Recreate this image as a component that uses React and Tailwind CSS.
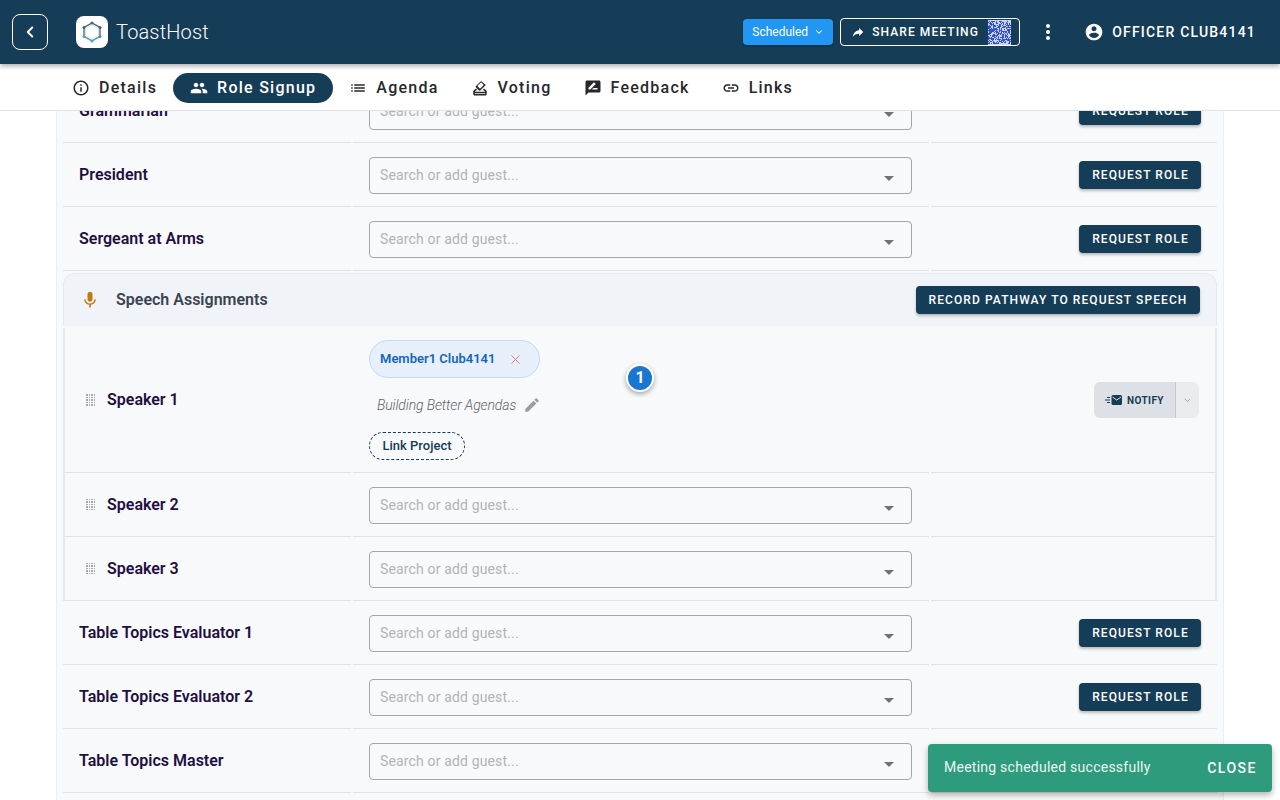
import { ChevronLeft, ChevronDown, X } from "lucide-react";

const icons = {
  info: "M11 7h2v2h-2zm0 4h2v6h-2zm1-9C6.48 2 2 6.48 2 12s4.48 10 10 10 10-4.48 10-10S17.52 2 12 2zm0 18c-4.41 0-8-3.59-8-8s3.59-8 8-8 8 3.59 8 8-3.59 8-8 8z",
  people: "M16 11c1.66 0 2.99-1.34 2.99-3S17.66 5 16 5c-1.66 0-3 1.34-3 3s1.34 3 3 3zm-8 0c1.66 0 2.99-1.34 2.99-3S9.66 5 8 5C6.34 5 5 6.34 5 8s1.34 3 3 3zm0 2c-2.33 0-7 1.17-7 3.5V19h14v-2.5c0-2.33-4.67-3.5-7-3.5zm8 0c-.29 0-.62.02-.97.05 1.16.84 1.97 1.97 1.97 3.45V19h6v-2.5c0-2.33-4.67-3.5-7-3.5z",
  list: "M3 13h2v-2H3v2zm0 4h2v-2H3v2zm0-8h2V7H3v2zm4 4h14v-2H7v2zm0 4h14v-2H7v2zM7 7v2h14V7H7z",
  vote: "M18 13h-.68l-2 2h1.91L19 17H5l1.78-2h2.05l-2-2H6l-3 3v4c0 1.1.89 2 1.99 2H19c1.1 0 2-.89 2-2v-4l-3-3zm1 7H5v-1h14v1zm-7.66-4.98c.39.39 1.02.39 1.41 0l6.36-6.36c.39-.39.39-1.02 0-1.41L14.16 3.3c-.38-.4-1.01-.4-1.4-.01L6.39 9.66c-.39.39-.39 1.02 0 1.41l4.95 4.95zm2.12-10.61L17 7.95l-4.95 4.95-3.54-3.54 4.95-4.95z",
  feedback: "M20 2H4c-1.1 0-2 .9-2 2v18l4-4h14c1.1 0 2-.9 2-2V4c0-1.1-.9-2-2-2zM6 14v-2.47l6.88-6.88c.2-.2.51-.2.71 0l1.77 1.77c.2.2.2.51 0 .71L8.47 14H6zm12 0h-7.5l2-2H18v2z",
  link: "M3.9 12c0-1.71 1.39-3.1 3.1-3.1h4V7H7c-2.76 0-5 2.24-5 5s2.24 5 5 5h4v-1.9H7c-1.71 0-3.1-1.39-3.1-3.1zM8 13h8v-2H8v2zm9-6h-4v1.9h4c1.71 0 3.1 1.39 3.1 3.1s-1.39 3.1-3.1 3.1h-4V17h4c2.76 0 5-2.24 5-5s-2.24-5-5-5z",
  share: "M14 9V5l7 7-7 7v-4.1c-5 0-8.5 1.6-11 5.1 1-5 4-10 11-11z",
  more: "M12 8c1.1 0 2-.9 2-2s-.9-2-2-2-2 .9-2 2 .9 2 2 2zm0 2c-1.1 0-2 .9-2 2s.9 2 2 2 2-.9 2-2-.9-2-2-2zm0 6c-1.1 0-2 .9-2 2s.9 2 2 2 2-.9 2-2-.9-2-2-2z",
  account: "M12 2C6.48 2 2 6.48 2 12s4.48 10 10 10 10-4.48 10-10S17.52 2 12 2zm0 3c1.66 0 3 1.34 3 3s-1.34 3-3 3-3-1.34-3-3 1.34-3 3-3zm0 14.2c-2.5 0-4.71-1.28-6-3.22.03-1.99 4-3.08 6-3.08 1.99 0 5.97 1.09 6 3.08-1.29 1.94-3.5 3.22-6 3.22z",
  mic: "M12 14c1.66 0 2.99-1.34 2.99-3L15 5c0-1.66-1.34-3-3-3S9 3.34 9 5v6c0 1.66 1.34 3 3 3zm5.3-3c0 3-2.54 5.1-5.3 5.1S6.7 14 6.7 11H5c0 3.41 2.72 6.23 6 6.72V21h2v-3.28c3.28-.48 6-3.3 6-6.72h-1.7z",
  edit: "M3 17.25V21h3.75L17.81 9.94l-3.75-3.75L3 17.25zM20.71 7.04c.39-.39.39-1.02 0-1.41l-2.34-2.34c-.39-.39-1.02-.39-1.41 0l-1.83 1.83 3.75 3.75 1.83-1.83z",
};

function Icon({ name, className }) {
  return (
    <svg viewBox="0 0 24 24" fill="currentColor" className={className}>
      <path d={icons[name]} />
    </svg>
  );
}

function Logo() {
  return (
    <svg viewBox="0 0 24 24" className="w-[24px] h-[24px]" fill="none">
      <path d="M4 16.500V7.500L12 3l8 4.500v9" stroke="#3f6478" strokeWidth="1.300" />
      <path d="M4 16.500L12 21l8-4.500" stroke="#5ba5ad" strokeWidth="1.500" />
      <path d="M5.500 15V9L12 5l6.500 4v6L12 19z" stroke="#cfe3e6" strokeWidth="0.800" />
      {[[12, 3, "#3f6478"], [20, 7.500, "#3f6478"], [20, 16.500, "#4f8f9c"], [12, 21, "#5ba5ad"], [4, 16.500, "#5ba5ad"], [4, 7.500, "#3f6478"]].map(([x, y, c]) => (
        <circle key={x + "-" + y} cx={x} cy={y} r="1.500" fill={c} />
      ))}
    </svg>
  );
}

// pseudo random qr-ish pattern, only needs to look like the thumbnail
function QrThumb() {
  const cells = [];
  let seed = 7;
  for (let y = 0; y < 23; y++) {
    for (let x = 0; x < 23; x++) {
      seed = (seed * 1103515245 + 12345) & 0x7fffffff;
      if ((seed >> 16) % 100 < 52) cells.push(<rect key={x + "_" + y} x={x} y={y} width="1" height="1" fill="#2f4fd8" />);
    }
  }
  return (
    <svg viewBox="0 0 23 23" className="block w-[23px] h-[25px] bg-[#c9d3f7]" shapeRendering="crispEdges">
      {cells}
    </svg>
  );
}

function DragDots() {
  return (
    <div className="grid grid-cols-4 gap-[1px] w-[9px] shrink-0 ml-[1px] -mr-[1px]">
      {Array.from({ length: 20 }).map((_, i) => (
        <span key={i} className="w-[1.500px] h-[1.500px] bg-[#a4a8b0]" />
      ))}
    </div>
  );
}

function GuestInput() {
  return (
    <div className="mt-[1px] w-[543px] h-[37px] rounded border border-[#a3a6ab] bg-[#f8f9fb] flex items-center justify-between pl-[10px] pr-[17px]">
      <span className="text-[14px] tracking-[0.15px] text-[#b1b3b7]">Search or add guest...</span>
      <span className="w-0 h-0 mt-[7px] border-x-[5px] border-x-transparent border-t-[5px] border-t-[#6f7276]" />
    </div>
  );
}

function RequestButton() {
  return (
    <button className="w-[122px] h-[28px] pl-[1px] rounded bg-[#163d57] text-white text-[12px] font-medium tracking-[1.080px] shadow-[0_2px_3px_rgba(0,0,0,0.25)]">
      REQUEST ROLE
    </button>
  );
}

function Row({ name, speaker, hideButton, children, right, height = "h-[64px]" }) {
  const line = "border-b border-[#e2e3e6]";
  return (
    <div className={`grid gap-x-[2px] w-[1154px] ${height} ${speaker ? "grid-cols-[286px_576px_284px] border-x-2 border-[#e4e8ee]" : "grid-cols-[288px_576px_286px]"}`}>
      <div className={`flex items-center ${line} ${speaker ? "pl-[20px] gap-[13px]" : "pl-[16px]"}`}>
        {speaker && <DragDots />}
        <span className="text-[16px] font-semibold text-[#1f0f42]">{name}</span>
      </div>
      <div className={`relative flex flex-col justify-center pl-[16px] ${line}`}>{children || <GuestInput />}</div>
      <div className={`flex items-center justify-end pr-[16px] ${line}`}>
        {right !== undefined ? right : !hideButton && <RequestButton />}
      </div>
    </div>
  );
}

const tabs = [
  { label: "Details", icon: "info" },
  { label: "Role Signup", icon: "people", active: true },
  { label: "Agenda", icon: "list" },
  { label: "Voting", icon: "vote" },
  { label: "Feedback", icon: "feedback" },
  { label: "Links", icon: "link" },
];

export default function App() {
  return (
    <div className="relative w-[1280px] h-[800px] overflow-hidden bg-white font-['Roboto',sans-serif]">
      <header className="relative z-20 h-[64px] bg-[#163d57] text-white flex items-center shadow-[0_2px_5px_rgba(0,0,0,0.35)]">
        <button className="ml-[12px] w-[36px] h-[36px] rounded-[8px] border border-white flex items-center justify-center">
          <ChevronLeft size={18} strokeWidth={2.500} />
        </button>
        <div className="ml-[28px] w-[32px] h-[32px] rounded-[8px] bg-white flex items-center justify-center">
          <Logo />
        </div>
        <span className="ml-[8px] text-[20px] font-light tracking-[0.15px]">ToastHost</span>
        <div className="ml-auto flex items-center">
          <button className="w-[90px] h-[26px] rounded bg-[#2196f3] flex items-center justify-center gap-[6px] text-[12px] text-white shadow-[0_1px_3px_rgba(0,0,0,0.3)]">
            Scheduled <ChevronDown size={10} strokeWidth={2.500} />
          </button>
          <button className="ml-[7px] w-[180px] h-[28px] rounded border border-white flex items-center pl-[10px] text-[12px] font-medium tracking-[1.080px]">
            <Icon name="share" className="w-[14px] h-[14px]" />
            <span className="ml-[7px]">SHARE MEETING</span>
            <span className="ml-[9px]"><QrThumb /></span>
          </button>
          <Icon name="more" className="ml-[16px] w-[24px] h-[24px]" />
          <Icon name="account" className="ml-[24px] w-[20px] h-[20px]" />
          <span className="ml-[8px] mr-[24px] text-[14px] font-medium tracking-[1.200px]">OFFICER CLUB4141</span>
        </div>
      </header>

      <nav className="h-[47px] pl-[56px] flex items-center border-b border-[#e0e2e5] bg-white pt-[1px]">
        {tabs.map((t) => (
          <button
            key={t.label}
            className={`h-[30px] rounded-full flex items-center gap-[9px] text-[16px] font-medium tracking-[1.250px] ${t.active ? "px-[17px] bg-[#163d57] text-white" : "px-[16px] text-[#26282b]"}`}
          >
            <Icon name={t.icon} className="w-[18px] h-[18px]" />
            {t.label}
          </button>
        ))}
      </nav>

      <main className="h-[689px] overflow-hidden">
        <div className="-mt-[32px] ml-[56px] w-[1168px] h-[760px] bg-[#f8f9fb] border-x border-[#eceef1] pl-[6px]">
          <Row name="Grammarian" />
          <Row name="President" />
          <Row name="Sergeant at Arms" />

          <div className="mt-[2px] w-[1154px] h-[53px] rounded-t-[12px] border-t border-x border-[#e6e9ef] bg-[#f0f3f8] flex items-center pl-[16px] pr-[16px]">
            <Icon name="mic" className="w-[20px] h-[20px] text-[#c27c0e]" />
            <span className="ml-[16px] text-[16px] font-semibold text-[#3b4450]">Speech Assignments</span>
            <button className="ml-auto w-[284px] h-[28px] rounded bg-[#163d57] text-white text-[12px] font-medium tracking-[1.090px] shadow-[0_2px_3px_rgba(0,0,0,0.25)]">
              RECORD PATHWAY TO REQUEST SPEECH
            </button>
          </div>

          <div className="mt-[2px]">
            <Row
              name="Speaker 1"
              speaker
              height="h-[145px]"
              right={
                <div className="flex h-[36px] rounded-[6px] overflow-hidden">
                  <div className="w-[82px] bg-[#dde1e5] border-r border-[#c4c8cc] flex items-center justify-center gap-[5px] text-[10px] font-bold tracking-[0.4px] text-[#163d57]">
                    <svg viewBox="0 0 17 10" className="w-[17px] h-[10px]" fill="#163d57">
                      <path d="M6.500 1.500A1.500 1.500 0 0 1 8 0h7.500A1.500 1.500 0 0 1 17 1.500v7a1.500 1.500 0 0 1-1.500 1.500H8a1.500 1.500 0 0 1-1.500-1.500z" />
                      <path d="M7.500 2l4.250 3L16 2" stroke="#dde1e5" strokeWidth="1" fill="none" />
                      <path d="M2 2h3v1H2zM0 4.500h5v1H0zM2 7h3v1H2z" />
                    </svg>
                    NOTIFY
                  </div>
                  <div className="w-[23px] bg-[#e9ebee] flex items-center justify-center text-[#9a9ea3]">
                    <ChevronDown size={9} strokeWidth={2.500} />
                  </div>
                </div>
              }
            >
              <div className="w-fit h-[38px] rounded-full border border-[#bfdcf5] bg-[#e7f0fa] flex items-center pl-[10px] pr-[16px] text-[13px] font-semibold text-[#1565c0]">
                Member1 Club4141
                <X size={15} strokeWidth={1.500} className="ml-[13px] text-[#d9727c]" />
              </div>
              <div className="mt-[17px] ml-[8px] h-[20px] flex items-center text-[14px] tracking-[-0.13px] italic font-light text-[#5f6368]">
                Building Better Agendas
                <Icon name="edit" className="ml-[7px] w-[18px] h-[18px] text-[#9a9da3]" />
              </div>
              <div className="mt-[17px] w-[96px] h-[28px] rounded-full border border-dashed border-[#163d57] flex items-center justify-center text-[13px] font-medium text-[#163d57]">
                Link Project
              </div>
              <span className="absolute left-[273px] top-[36px] w-[28px] h-[28px] rounded-full bg-[#1976d2] border-2 border-white text-white text-[16px] font-bold flex items-center justify-center shadow-[0_2px_5px_rgba(0,0,0,0.35)]">
                1
              </span>
            </Row>
            <Row name="Speaker 2" speaker right={null} />
            <Row name="Speaker 3" speaker right={null} />
          </div>

          <Row name="Table Topics Evaluator 1" />
          <Row name="Table Topics Evaluator 2" />
          <Row name="Table Topics Master" hideButton />
        </div>
      </main>

      <div className="absolute left-[928px] top-[744px] w-[344px] h-[48px] rounded bg-[#2e9b7d] text-white flex items-center justify-between pl-[16px] pr-[15px] shadow-[0_3px_6px_rgba(0,0,0,0.3)]">
        <span className="text-[14px] tracking-[0.25px] text-[#eaf6f2] -mt-[1px]">Meeting scheduled successfully</span>
        <button className="text-[14px] font-medium tracking-[1.500px]">CLOSE</button>
      </div>
    </div>
  );
}
